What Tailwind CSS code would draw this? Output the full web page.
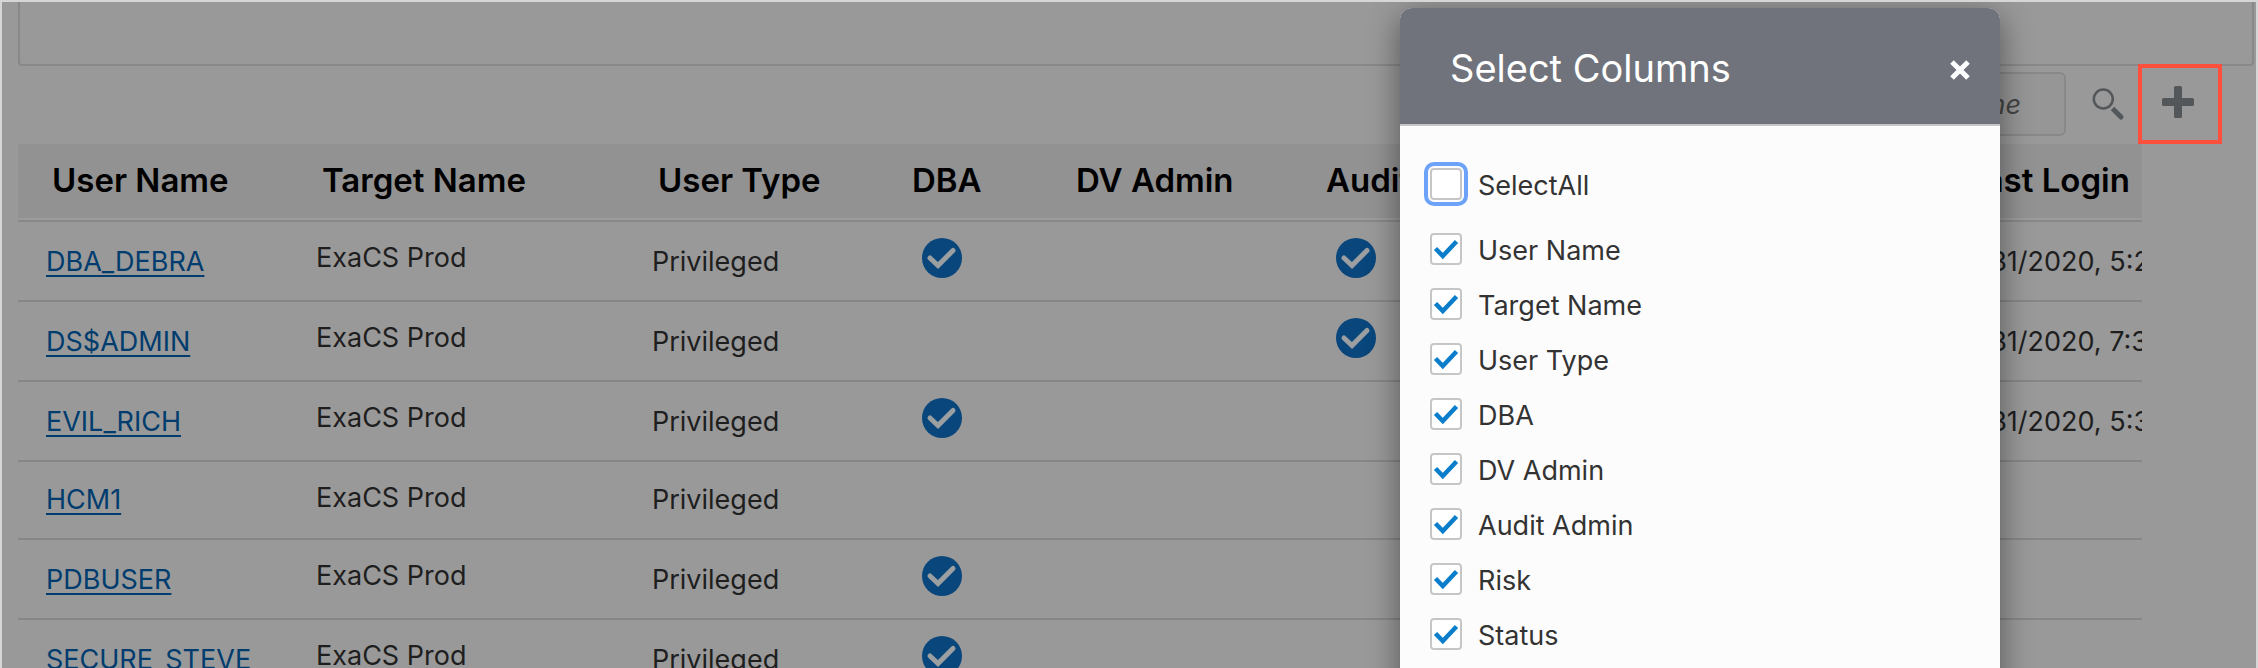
<!DOCTYPE html>
<html lang="en">
<head>
<meta charset="utf-8">
<title>User Assessment</title>
<script src="https://cdn.jsdelivr.net/npm/@tailwindcss/browser@4"></script>
</head>
<body class="font-['Inter',sans-serif] text-[27px] leading-9 text-[#1e1e1e]">
<svg class="hidden" aria-hidden="true">
  <symbol id="yes" viewBox="0 0 40 40"><circle cx="20" cy="20" r="20" fill="#08467c"/><path d="M8 20l8 7.500L31 12.500" fill="none" stroke="#9c9fa2" stroke-width="5" stroke-linecap="round" stroke-linejoin="miter"/></symbol>
  <symbol id="tick" viewBox="0 0 32 32"><path d="M5.500 15.500l7.300 7.500L26.500 8.500" fill="none" stroke="#0a7dcb" stroke-width="4.500"/></symbol>
</svg>
<div class="relative h-screen overflow-hidden border-x-2 border-t-2 border-[#d6d6d6] bg-[#999]">
  <section class="mr-[2px] ml-4 h-16 rounded-b-sm border-2 border-t-0 border-[#888]"></section>

  <div class="flex h-[78px] items-start justify-end pr-[34px]">
    <input type="text" aria-label="Search users" placeholder="Target Name" class="mt-[6px] h-16 w-[400px] rounded-md border-2 border-[#888] bg-[#969696] pr-[43px] text-right italic placeholder:text-[#444] placeholder:opacity-100">
    <button type="button" aria-label="Search" class="mt-[6px] h-16 w-[72px]">
      <svg class="h-16 w-[72px]" viewBox="0 0 72 64" fill="none" stroke="#54575a"><circle cx="37.300" cy="27" r="9.500" stroke-width="2.500"/><path d="M46.500 36.500l7.500 7.500" stroke-width="5"/><path d="M54 44l1 1" stroke-width="5" stroke-linecap="round"/></svg>
    </button>
    <button type="button" aria-label="Select columns" class="-mt-[2px] flex h-20 w-[84px] items-center justify-center border-4 border-[#ff503e]">
      <svg class="size-9" viewBox="0 0 36 36" fill="#54575a"><rect y="12" width="32" height="8" rx="1.500"/><rect x="12" width="8" height="32" rx="1.500"/></svg>
    </button>
  </div>

  <div class="mr-[114px] ml-4">
    <table class="w-full table-fixed border-separate border-spacing-0 whitespace-nowrap text-left [&_td]:overflow-hidden [&_td]:border-b-2 [&_td]:border-[#868686] [&_td]:p-0 [&_td]:pl-7 [&_td]:align-top [&_th]:h-[78px] [&_th]:overflow-hidden [&_th]:border-b-2 [&_th]:border-[#888] [&_th]:bg-[#929292] [&_th]:bg-clip-padding [&_th]:p-0 [&_th]:pt-[14px] [&_th]:pl-[34px] [&_th]:align-top [&_th]:text-[33px] [&_th]:leading-[44px] [&_th]:font-semibold [&_th]:text-black [&_th]:shadow-[inset_0_-2px_0_#9c9c9c] [&_a]:text-[#003c6e] [&_a]:underline [&_a]:decoration-2 [&_a]:underline-offset-4 [&_a]:[text-decoration-skip-ink:none] [&_svg]:mt-4 [&_svg]:ml-4 [&_svg]:size-10">
      <colgroup>
        <col class="w-[270px]"><col class="w-[336px]"><col class="w-[254px]"><col class="w-[164px]"><col class="w-[250px]"><col class="w-[270px]"><col class="w-[180px]"><col class="w-[190px]"><col>
      </colgroup>
      <thead>
        <tr><th>User Name</th><th>Target Name</th><th>User Type</th><th>DBA</th><th>DV Admin</th><th>Audit Admin</th><th>Risk</th><th>Status</th><th>Last Login</th></tr>
      </thead>
      <tbody>
        <tr class="h-20"><td><div class="pt-[22px]"><a href="#">DBA_DEBRA</a></div></td><td><div class="pt-[18px]">ExaCS Prod</div></td><td><div class="pt-[22px]">Privileged</div></td><td><svg role="img" aria-label="Yes"><use href="#yes"/></svg></td><td></td><td><svg role="img" aria-label="Yes"><use href="#yes"/></svg></td><td></td><td></td><td><div class="pt-[22px] pl-1">5/31/2020, 5:22</div></td></tr>
        <tr class="h-20"><td><div class="pt-[22px]"><a href="#">DS$ADMIN</a></div></td><td><div class="pt-[18px]">ExaCS Prod</div></td><td><div class="pt-[22px]">Privileged</div></td><td></td><td></td><td><svg role="img" aria-label="Yes"><use href="#yes"/></svg></td><td></td><td></td><td><div class="pt-[22px] pl-1">5/31/2020, 7:32</div></td></tr>
        <tr class="h-20"><td><div class="pt-[22px]"><a href="#">EVIL_RICH</a></div></td><td><div class="pt-[18px]">ExaCS Prod</div></td><td><div class="pt-[22px]">Privileged</div></td><td><svg role="img" aria-label="Yes"><use href="#yes"/></svg></td><td></td><td></td><td></td><td></td><td><div class="pt-[22px] pl-1">5/31/2020, 5:32</div></td></tr>
        <tr class="h-[78px]"><td><div class="pt-5"><a href="#">HCM1</a></div></td><td><div class="pt-[18px]">ExaCS Prod</div></td><td><div class="pt-5">Privileged</div></td><td></td><td></td><td></td><td></td><td></td><td></td></tr>
        <tr class="h-20"><td><div class="pt-[22px]"><a href="#">PDBUSER</a></div></td><td><div class="pt-[18px]">ExaCS Prod</div></td><td><div class="pt-[22px]">Privileged</div></td><td><svg role="img" aria-label="Yes"><use href="#yes"/></svg></td><td></td><td></td><td></td><td></td><td></td></tr>
        <tr class="h-20"><td><div class="pt-[22px]"><a href="#">SECURE_STEVE</a></div></td><td><div class="pt-[18px]">ExaCS Prod</div></td><td><div class="pt-[22px]">Privileged</div></td><td><svg role="img" aria-label="Yes"><use href="#yes"/></svg></td><td></td><td></td><td></td><td></td><td></td></tr>
      </tbody>
    </table>
  </div>

  <div role="dialog" aria-labelledby="dialog-title" class="absolute top-[6px] right-64 -bottom-10 w-[600px] overflow-hidden rounded-t-xl bg-[#fcfcfc] text-[#333] shadow-[0_8px_32px_rgba(0,0,0,0.45)]">
    <header class="flex h-[118px] items-center justify-between border-b-2 border-[#c4c6c8] bg-[#70737c] pr-[30px] pl-[50px] text-white">
      <h2 id="dialog-title" class="pt-1 text-[38px] leading-[52px]">Select Columns</h2>
      <button type="button" aria-label="Close" class="mt-2"><svg class="size-5" viewBox="0 0 20 20"><path d="M2 2l16 16M18 2L2 18" stroke="#fff" stroke-width="5"/></svg></button>
    </header>
    <div class="pt-[42px] pl-[30px] [&_input]:col-start-1 [&_input]:row-start-1 [&_input]:size-8 [&_input]:appearance-none [&_input]:rounded-sm [&_input]:border-2 [&_input]:border-[#c6c6c6] [&_input]:bg-white [&_label]:flex [&_label]:items-start [&_label]:gap-4 [&_span]:grid [&_svg]:pointer-events-none [&_svg]:col-start-1 [&_svg]:row-start-1 [&_svg]:size-8">
      <label class="h-[65px]"><span><input type="checkbox" class="outline-4 outline-offset-2 outline-[#6ca2f8]"></span>SelectAll</label>
      <ul class="[&>li]:h-[55px]">
        <li><label><span><input type="checkbox" checked><svg><use href="#tick"/></svg></span>User Name</label></li>
        <li><label><span><input type="checkbox" checked><svg><use href="#tick"/></svg></span>Target Name</label></li>
        <li><label><span><input type="checkbox" checked><svg><use href="#tick"/></svg></span>User Type</label></li>
        <li><label><span><input type="checkbox" checked><svg><use href="#tick"/></svg></span>DBA</label></li>
        <li><label><span><input type="checkbox" checked><svg><use href="#tick"/></svg></span>DV Admin</label></li>
        <li><label><span><input type="checkbox" checked><svg><use href="#tick"/></svg></span>Audit Admin</label></li>
        <li><label><span><input type="checkbox" checked><svg><use href="#tick"/></svg></span>Risk</label></li>
        <li><label><span><input type="checkbox" checked><svg><use href="#tick"/></svg></span>Status</label></li>
      </ul>
    </div>
  </div>
</div>
</body>
</html>
